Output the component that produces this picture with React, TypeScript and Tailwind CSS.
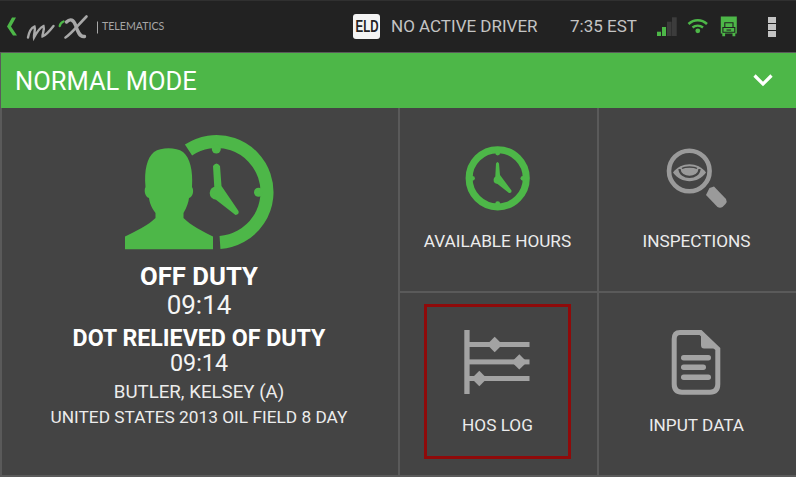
const GREEN = "#4db748";

function Logo() {
  return (
    <svg width="100" height="52" viewBox="0 0 100 52" className="shrink-0">
      <polygon points="12,16.5 16,16.5 11,25.5 17,34.5 13,34.5 7,25.5" fill={GREEN} />
      <path d="M28 36.5 C29 31 31 27 34.5 25.5 C36 29 33.5 33 34 36.5 C37 31 40 26.5 43.5 25 C45 29 42 33 42.5 35.5 C46.5 34 50 29.5 53.5 25" fill="none" stroke="#a8a8a8" strokeWidth="2.4" strokeLinecap="round" />
      <path d="M59.8 25 C60 23 61 21.5 63.5 20.5" fill="none" stroke={GREEN} strokeWidth="2.4" strokeLinecap="round" />
      <path d="M66.5 21 C70.5 17 73.5 19 75.5 24 C77.5 30 79.5 36.5 84.5 35.5" fill="none" stroke="#a8a8a8" strokeWidth="3.4" strokeLinecap="round" />
      <path d="M65.5 36.5 C71.5 33 78 24 86.5 15.5" fill="none" stroke="#a8a8a8" strokeWidth="2.6" strokeLinecap="round" />
      <rect x="97" y="20.5" width="1" height="12" fill="#a8a8a8" />
    </svg>
  );
}

function Status() {
  return (
    <div className="flex items-center">
      <svg width="21" height="20" viewBox="655 17 21 20" className="ml-[18px]">
        <rect x="656" y="31.7" width="4" height="4.3" fill={GREEN} />
        <rect x="661" y="27" width="4" height="9" fill={GREEN} />
        <rect x="666" y="21.7" width="4.5" height="14.3" fill="#3c3c3c" />
        <rect x="671" y="17.3" width="4.7" height="18.7" fill="#3c3c3c" />
      </svg>
      <svg width="22" height="20" viewBox="686 17 22 20" className="ml-[10px]">
        <path d="M687.5 24 C693 19 700.5 19 706 24" fill="none" stroke={GREEN} strokeWidth="2.6" />
        <path d="M691.5 27.5 C694.5 25 699 25 702 27.5" fill="none" stroke={GREEN} strokeWidth="2.4" />
        <circle cx="696.8" cy="30.8" r="2.4" fill={GREEN} />
      </svg>
      <svg width="18" height="21" viewBox="718.5 15.5 18 21" className="ml-[10.5px]">
        <path d="M719.3 16 H735.3 V33 H733.8 V35.8 H731 V33 H723.6 V35.8 H720.8 V33 H719.3 Z" fill={GREEN} />
        <path d="M723.3 27 V22.3 H731.5 V27" fill="none" stroke="#222222" strokeWidth="1.1" />
        <path d="M721.4 27 H733.3 V31.7 H721.4 Z" fill="none" stroke="#222222" strokeWidth="1.1" />
        <rect x="725" y="29" width="4.6" height="1.1" fill="#222222" />
      </svg>
      <div className="ml-[30.5px] mt-[1px] flex flex-col gap-[1px]">
        <div className="w-[8px] h-[6px] bg-[#c4c4c4]" />
        <div className="w-[8px] h-[6px] bg-[#c4c4c4]" />
        <div className="w-[8px] h-[6px] bg-[#c4c4c4]" />
      </div>
    </div>
  );
}

function PersonClock() {
  return (
    <svg width="150" height="116" viewBox="123 134 150 116" className="shrink-0">
      <path
        d="M124 249.3 V236.5 C133 232 148 225 154.5 218 V213 C150 207 148.5 202 148 198 C144.5 197 142.5 191 144.5 187 C143 170 146 158 153 152 C160 147 175 147 182 152 C189 158 192 170 191 187 C193.5 191 191.5 197 188 198 C187.5 202 186 207 182.5 213 V218 C189 225 203 232 212 236.5 V249.3 Z"
        fill={GREEN}
      />
      <path d="M219 242.4 A50.5 50.5 0 1 0 187.5 150" fill="none" stroke={GREEN} strokeWidth="13" />
      <circle cx="215.3" cy="149" r="4.5" fill={GREEN} />
      <circle cx="257.5" cy="192.3" r="4.5" fill={GREEN} />
      <path d="M212 166 Q215.5 161 219 166 L220.5 186 L237.5 211 Q238.5 214.5 234.5 215 L214 199 Z" fill={GREEN} />
      <circle cx="215.3" cy="193" r="6.6" fill={GREEN} />
    </svg>
  );
}

function ClockIcon() {
  return (
    <svg width="66" height="66" viewBox="464 145 66 66">
      <circle cx="496.7" cy="178.3" r="28.6" fill="none" stroke={GREEN} strokeWidth="7" />
      <circle cx="496.7" cy="153" r="2.4" fill={GREEN} />
      <circle cx="496.7" cy="203.6" r="2.4" fill={GREEN} />
      <circle cx="471.5" cy="178.3" r="2.4" fill={GREEN} />
      <circle cx="521.9" cy="178.3" r="2.4" fill={GREEN} />
      <path d="M495 163.5 Q496.5 160.5 498 163.5 L499 175 L510.5 190.5 Q511 193.5 508 193 L494 182 Z" fill={GREEN} />
      <circle cx="496.4" cy="180" r="3.8" fill={GREEN} />
    </svg>
  );
}

function EyeIcon() {
  return (
    <svg width="66" height="66" viewBox="664 144 66 66">
      <circle cx="689.3" cy="170" r="20.3" fill="none" stroke="#9a9a9a" strokeWidth="4.6" />
      <path d="M709.5 187 L714 185.5 L726 198 Q727.5 200.5 725.5 203 L722.5 206 Q720 207.5 717.5 206 L706 194 Z" fill="#9a9a9a" />
      <path d="M673 171.5 C681 160.5 698 160.5 706 171.5 C698 183 681 183 673 171.5 Z" fill="#9a9a9a" />
      <path d="M679.5 168 C680 178.5 699 178.5 699.5 168" fill="none" stroke="#444444" strokeWidth="2.2" />
      <path d="M682 167.5 C685 165.5 694 165.5 697 167.5" fill="none" stroke="#444444" strokeWidth="1.4" />
    </svg>
  );
}

function HosIcon() {
  return (
    <svg width="68" height="66" viewBox="464 329 68 66">
      <rect x="464.3" y="330" width="5.3" height="64" fill="#a3a3a3" />
      <rect x="469" y="342" width="60.5" height="5" fill="#a3a3a3" />
      <rect x="469" y="359.4" width="60.5" height="5" fill="#a3a3a3" />
      <rect x="469" y="376" width="60.5" height="5" fill="#a3a3a3" />
      <polygon points="494.7,336.8 502.4,344.5 494.7,352.2 487,344.5" fill="#a3a3a3" />
      <polygon points="519.3,354.2 527,361.9 519.3,369.6 511.6,361.9" fill="#a3a3a3" />
      <polygon points="479.3,370.8 487,378.5 479.3,386.2 471.6,378.5" fill="#a3a3a3" />
    </svg>
  );
}

function DocIcon() {
  return (
    <svg width="52" height="67" viewBox="670 329 52 67">
      <path d="M679 332.5 H699.5 L716.8 349 V384 Q716.8 392.2 709 392.2 H681 Q673.2 392.2 673.2 384 V339 Q673.2 332.5 679 332.5 Z" fill="none" stroke="#a3a3a3" strokeWidth="5" />
      <path d="M700 331 L719 348.5 H703 Q700 348.5 700 345 Z" fill="#a3a3a3" />
      <rect x="680" y="355" width="30" height="5.4" rx="2.7" fill="#a3a3a3" />
      <rect x="680" y="364.5" width="25" height="5.4" rx="2.7" fill="#a3a3a3" />
      <rect x="680" y="374.5" width="30" height="5.4" rx="2.7" fill="#a3a3a3" />
    </svg>
  );
}

function Tile({ icon, label, pt }: { icon: React.ReactNode; label: string; pt: string }) {
  return (
    <div className={`bg-[#444444] flex flex-col items-center pr-[2px] ${pt}`}>
      {icon}
      <div className="text-[17.2px] leading-[20px] text-[#ececec] mt-[20px] whitespace-nowrap">{label}</div>
    </div>
  );
}

export default function App() {
  return (
    <div className="w-[796px] h-[477px] bg-[#5a5a5a] overflow-hidden flex flex-col font-['Roboto',sans-serif]">
      <div className="h-[52px] shrink-0 bg-[#222222] border-t border-[#303030] flex items-center">
        <Logo />
        <div className="ml-[2px] text-[10.6px] text-[#a6a6a6] w-[61px] whitespace-nowrap font-['Lato',sans-serif]">TELEMATICS</div>
        <div className="ml-[190px] w-[27px] h-[25px] rounded-[3px] bg-[#f4f4f4] flex items-center justify-center text-[16px] font-bold text-[#222222] font-['Liberation_Sans',sans-serif]">
          <span className="inline-block scale-x-[0.72]">ELD</span>
        </div>
        <div className="ml-[11px] text-[17px] text-[#c4c4c4] w-[179px] whitespace-nowrap">NO ACTIVE DRIVER</div>
        <div className="text-[17px] text-[#c4c4c4] whitespace-nowrap w-[67px]">7:35 EST</div>
        <div className="ml-[1px]"><Status /></div>
      </div>
      <div className="h-[55px] shrink-0 mt-[1px] ml-[1px] bg-[#4db748] flex items-center justify-between pl-[14px] pr-[22px]">
        <span className="text-[25.5px] mt-[2px] text-white whitespace-nowrap">NORMAL MODE</span>
        <svg width="22" height="14" viewBox="0 0 22 14" className="mb-[1px]">
          <path d="M2.5 2.5 L11 11 L19.5 2.5" fill="none" stroke="#ffffff" strokeWidth="3.2" />
        </svg>
      </div>
      <div className="flex-1 pl-[2px] grid grid-cols-[396px_197px_197px] grid-rows-[183px_182px] gap-x-[2px] gap-y-[2px]">
        <div className="row-span-2 bg-[#444444] flex flex-col items-center pt-[26px] pr-[2px] text-white">
          <PersonClock />
          <div className="mt-[12px] text-[25.7px] leading-[28px] font-bold whitespace-nowrap">OFF DUTY</div>
          <div className="mt-[1px] text-[26px] leading-[28px] text-[#f4f4f4] whitespace-nowrap">09:14</div>
          <div className="mt-[8px] text-[23.2px] leading-[22px] font-bold whitespace-nowrap">DOT RELIEVED OF DUTY</div>
          <div className="text-[23.3px] leading-[28px] text-[#f4f4f4] whitespace-nowrap">09:14</div>
          <div className="mt-[3px] text-[18.7px] leading-[24px] text-[#ececec] whitespace-nowrap">BUTLER, KELSEY (A)</div>
          <div className="mt-[1px] text-[17.3px] leading-[24px] text-[#ececec] whitespace-nowrap">UNITED STATES 2013 OIL FIELD 8 DAY</div>
        </div>
        <Tile pt="pt-[37px]" icon={<ClockIcon />} label="AVAILABLE HOURS" />
        <Tile pt="pt-[37px]" icon={<EyeIcon />} label="INSPECTIONS" />
        <div className="bg-[#444444] relative flex flex-col items-center pt-[36px] pr-[2px]">
          <HosIcon />
          <div className="text-[17.2px] leading-[20px] text-[#ececec] mt-[20px] whitespace-nowrap">HOS LOG</div>
          <div className="absolute left-[24px] top-[11px] w-[147px] h-[155px] border-[3px] border-[#8f0a0a]" />
        </div>
        <div className="bg-[#444444] flex flex-col items-center pt-[36px] pr-[2px]">
          <DocIcon />
          <div className="text-[17.2px] leading-[20px] text-[#ececec] mt-[19px] whitespace-nowrap">INPUT DATA</div>
        </div>
      </div>
    </div>
  );
}
